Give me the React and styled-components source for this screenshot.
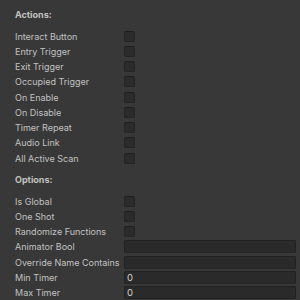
import React from "react";
import styled, { createGlobalStyle } from "styled-components";

const Global = createGlobalStyle`
  html, body { margin: 0; padding: 0; background: #383838; }
  body { font-family: Inter, "Liberation Sans", sans-serif; }
`;

const Panel = styled.div`
  width: 300px;
  height: 300px;
  box-sizing: border-box;
  padding: 0 4px 0 15px;
  background: #383838;
  overflow: hidden;
  color: #c2c2c2;
  font-size: 9px;
`;

const Header = styled.div`
  height: 15px;
  line-height: 15px;
  font-weight: 700;
  margin: ${(p) => p.$top}px 0 6.5px 0;
`;

const Row = styled.div`
  display: grid;
  grid-template-columns: 109px 1fr;
  align-items: center;
  height: 15.25px;
`;

const Label = styled.span`
  white-space: nowrap;
  line-height: 15px;
`;

const Check = styled.span`
  width: 11px;
  height: 11px;
  box-sizing: border-box;
  background: #2b2b2b;
  border: 1px solid #242424;
  border-top-color: #1e1e1e;
  border-radius: 2px;
`;

const Field = styled.div`
  height: 13px;
  box-sizing: border-box;
  background: #2a2a2a;
  border: 1px solid #212121;
  border-bottom-color: #252525;
  border-radius: 2px;
  padding-left: 2px;
  line-height: 11px;
  font-size: 9.5px;
  color: #d2d2d2;
`;

const actions = [
  "Interact Button",
  "Entry Trigger",
  "Exit Trigger",
  "Occupied Trigger",
  "On Enable",
  "On Disable",
  "Timer Repeat",
  "Audio Link",
  "All Active Scan",
];

const options = [
  { label: "Is Global", type: "check" },
  { label: "One Shot", type: "check" },
  { label: "Randomize Functions", type: "check" },
  { label: "Animator Bool", type: "field", value: "" },
  { label: "Override Name Contains", type: "field", value: "" },
  { label: "Min Timer", type: "field", value: "0" },
  { label: "Max Timer", type: "field", value: "0" },
];

export default function App() {
  return (
    <>
      <Global />
      <Panel>
        <Header $top={7}>Actions:</Header>
        {actions.map((a) => (
          <Row key={a}>
            <Label>{a}</Label>
            <Check />
          </Row>
        ))}
        <Header $top={6.25}>Options:</Header>
        {options.map((o) => (
          <Row key={o.label}>
            <Label>{o.label}</Label>
            {o.type === "check" ? <Check /> : <Field>{o.value}</Field>}
          </Row>
        ))}
      </Panel>
    </>
  );
}
